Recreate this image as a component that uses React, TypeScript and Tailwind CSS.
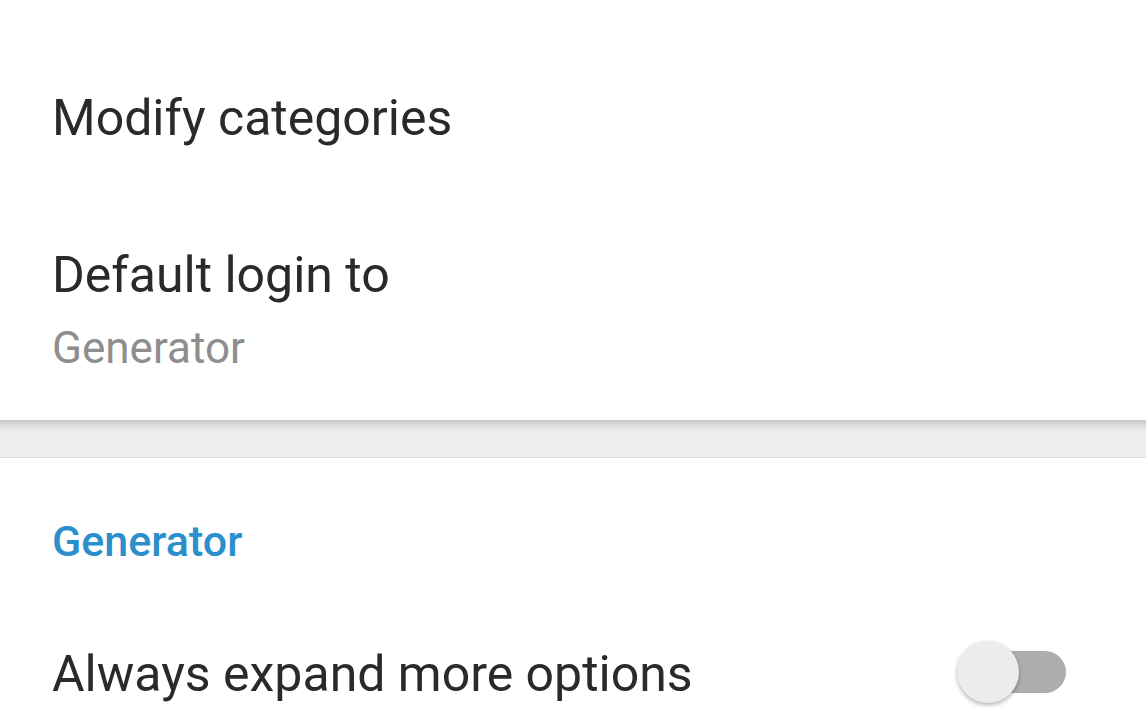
export default function App() {
  return (
    <div className="w-[1146px] h-[716px] overflow-hidden bg-white font-['Roboto',sans-serif] text-[#2a2a2a]">
      <div className="pt-[88px] pb-[46px] px-[52px] bg-white">
        <p className="text-[50px] leading-[60px]">Modify categories</p>
        <p className="mt-[97px] text-[50px] leading-[60px]">Default login to</p>
        <p className="mt-[17px] text-[44px] leading-[52px] text-[#8e8e8e]">Generator</p>
      </div>
      <div className="h-[38px] border-b border-[#e0e0e0] bg-[linear-gradient(to_bottom,#c6c6c6,#e2e2e2_7px,#eeeeee_13px)]" />
      <div className="pt-[58px] pl-[52px] pr-[80px]">
        <p className="text-[43px] leading-[50px] font-medium text-[#2a8fcb]">Generator</p>
        <div className="mt-[78px] flex items-center justify-between">
          <p className="text-[50px] leading-[60px]">Always expand more options</p>
          <div className="relative w-[109px] h-[62px] -mt-[4px]">
            <div className="absolute right-0 top-[10px] w-[92px] h-[42px] rounded-full bg-[#adadad]" />
            <div className="absolute left-0 top-0 w-[62px] h-[62px] rounded-full bg-[#ececec] shadow-[0_2px_4px_rgba(0,0,0,0.3)]" />
          </div>
        </div>
      </div>
    </div>
  );
}
